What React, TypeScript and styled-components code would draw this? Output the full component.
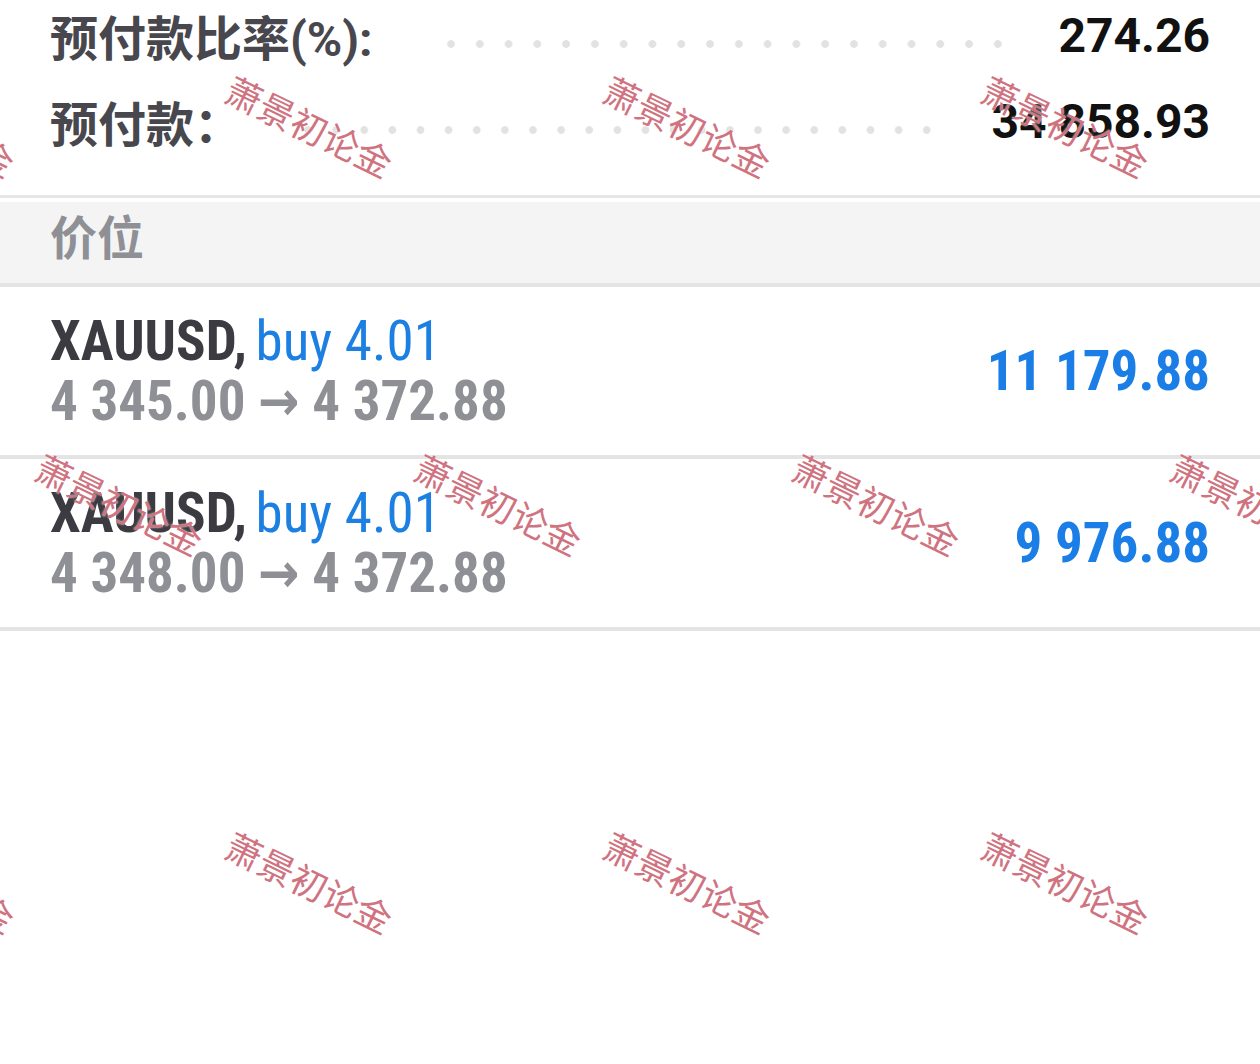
import { FC } from "react";
import styled, { createGlobalStyle } from "styled-components";

const GlobalStyle = createGlobalStyle`
  body {
    margin: 0;
    background: #ffffff;
    font-family: Roboto, "Noto Sans CJK SC", sans-serif;
  }
`;

const Page = styled.div`
  position: relative;
  min-height: 1064px;
  overflow: hidden;
  background: #ffffff;
`;

const Summary = styled.div`
  margin-top: -8px;
  padding: 0 50px 31px;
  border-bottom: 3px solid #e6e6e6;
`;

const SummaryRow = styled.div`
  display: flex;
  align-items: center;
  height: 86px;
`;

const Label = styled.span`
  font-family: Roboto, "Noto Sans CJK SC", sans-serif;
  font-weight: 700;
  font-size: 48px;
  color: #47474d;
  white-space: nowrap;
`;

const Leader = styled.span<{ $left: number; $right: number }>`
  flex: 1;
  height: 8px;
  margin: 17px ${(p) => p.$right}px 0 ${(p) => p.$left}px;
  background: radial-gradient(circle, #e2e2e2 3.5px, transparent 4.2px) 0 0 / 28px 8px;
  background-repeat: space no-repeat;
`;

const Amount = styled.span`
  font-family: Roboto, sans-serif;
  font-weight: 700;
  font-size: 48px;
  color: #111111;
  white-space: nowrap;
`;

const SectionHeader = styled.div`
  margin-top: 4px;
  height: 85px;
  box-sizing: border-box;
  padding: 0 50px 16px;
  display: flex;
  align-items: center;
  background: #f4f4f4;
  border-bottom: 4px solid #e4e4e4;
`;

const HeaderTitle = styled.span`
  font-family: "Noto Sans CJK SC", sans-serif;
  font-weight: 700;
  font-size: 47px;
  color: #8f9095;
`;

const PositionRow = styled.div`
  height: 172px;
  box-sizing: border-box;
  padding: 0 50px;
  display: flex;
  align-items: center;
  justify-content: space-between;
  border-bottom: 4px solid #e4e4e4;
`;

const Info = styled.div`
  display: flex;
  flex-direction: column;
`;

const Condensed = styled.div`
  font-family: "Roboto Condensed", "Liberation Sans Narrow", "DejaVu Sans Condensed", Roboto, sans-serif;
  font-stretch: condensed;
  font-size: 55px;
  line-height: 60px;
  white-space: nowrap;
`;

const Title = styled(Condensed)`
  font-weight: 700;
  color: #3b3b41;
  word-spacing: -4px;
`;

const Side = styled.span`
  font-weight: 400;
  color: #1c7fe2;
  word-spacing: 0;
`;

const Prices = styled(Condensed)`
  font-weight: 700;
  color: #8f9095;
`;

const Profit = styled(Condensed)`
  font-weight: 700;
  color: #1a7ee6;
`;

const WatermarkLayer = styled.div`
  position: absolute;
  inset: 0;
  pointer-events: none;
  z-index: 2;
`;

const Mark = styled.span`
  position: absolute;
  transform: translate(-50%, -50%) rotate(26deg);
  font-family: "Noto Sans CJK SC", sans-serif;
  font-size: 36px;
  font-weight: 400;
  color: #d07380;
  white-space: nowrap;
  text-shadow: 0 0 2px rgba(255, 255, 255, 0.9);
`;

const summary = [
  { label: "预付款比率(%):", value: "274.26", left: 64, right: 46 },
  { label: "预付款：", value: "34 858.93", left: 52, right: 50 },
];

const positions = [
  { symbol: "XAUUSD", side: "buy 4.01", open: "4 345.00", close: "4 372.88", profit: "11 179.88" },
  { symbol: "XAUUSD", side: "buy 4.01", open: "4 348.00", close: "4 372.88", profit: "9 976.88" },
];

const markRows = [125, 503, 881];
const markCols = [
  [-68, 310, 688, 1066],
  [120, 499, 877, 1255],
];

const App: FC = () => {
  return (
    <Page>
      <GlobalStyle />
      <Summary>
        {summary.map((row) => (
          <SummaryRow key={row.label}>
            <Label>{row.label}</Label>
            <Leader $left={row.left} $right={row.right} />
            <Amount>{row.value}</Amount>
          </SummaryRow>
        ))}
      </Summary>
      <SectionHeader>
        <HeaderTitle>价位</HeaderTitle>
      </SectionHeader>
      {positions.map((p, i) => (
        <PositionRow key={i}>
          <Info>
            <Title>
              {p.symbol}, <Side>{p.side}</Side>
            </Title>
            <Prices>
              {p.open} → {p.close}
            </Prices>
          </Info>
          <Profit>{p.profit}</Profit>
        </PositionRow>
      ))}
      <WatermarkLayer>
        {markRows.map((y, r) =>
          markCols[r % 2].map((x) => (
            <Mark key={`${r}-${x}`} style={{ left: x, top: y }}>
              萧景初论金
            </Mark>
          ))
        )}
      </WatermarkLayer>
    </Page>
  );
};

export default App;
